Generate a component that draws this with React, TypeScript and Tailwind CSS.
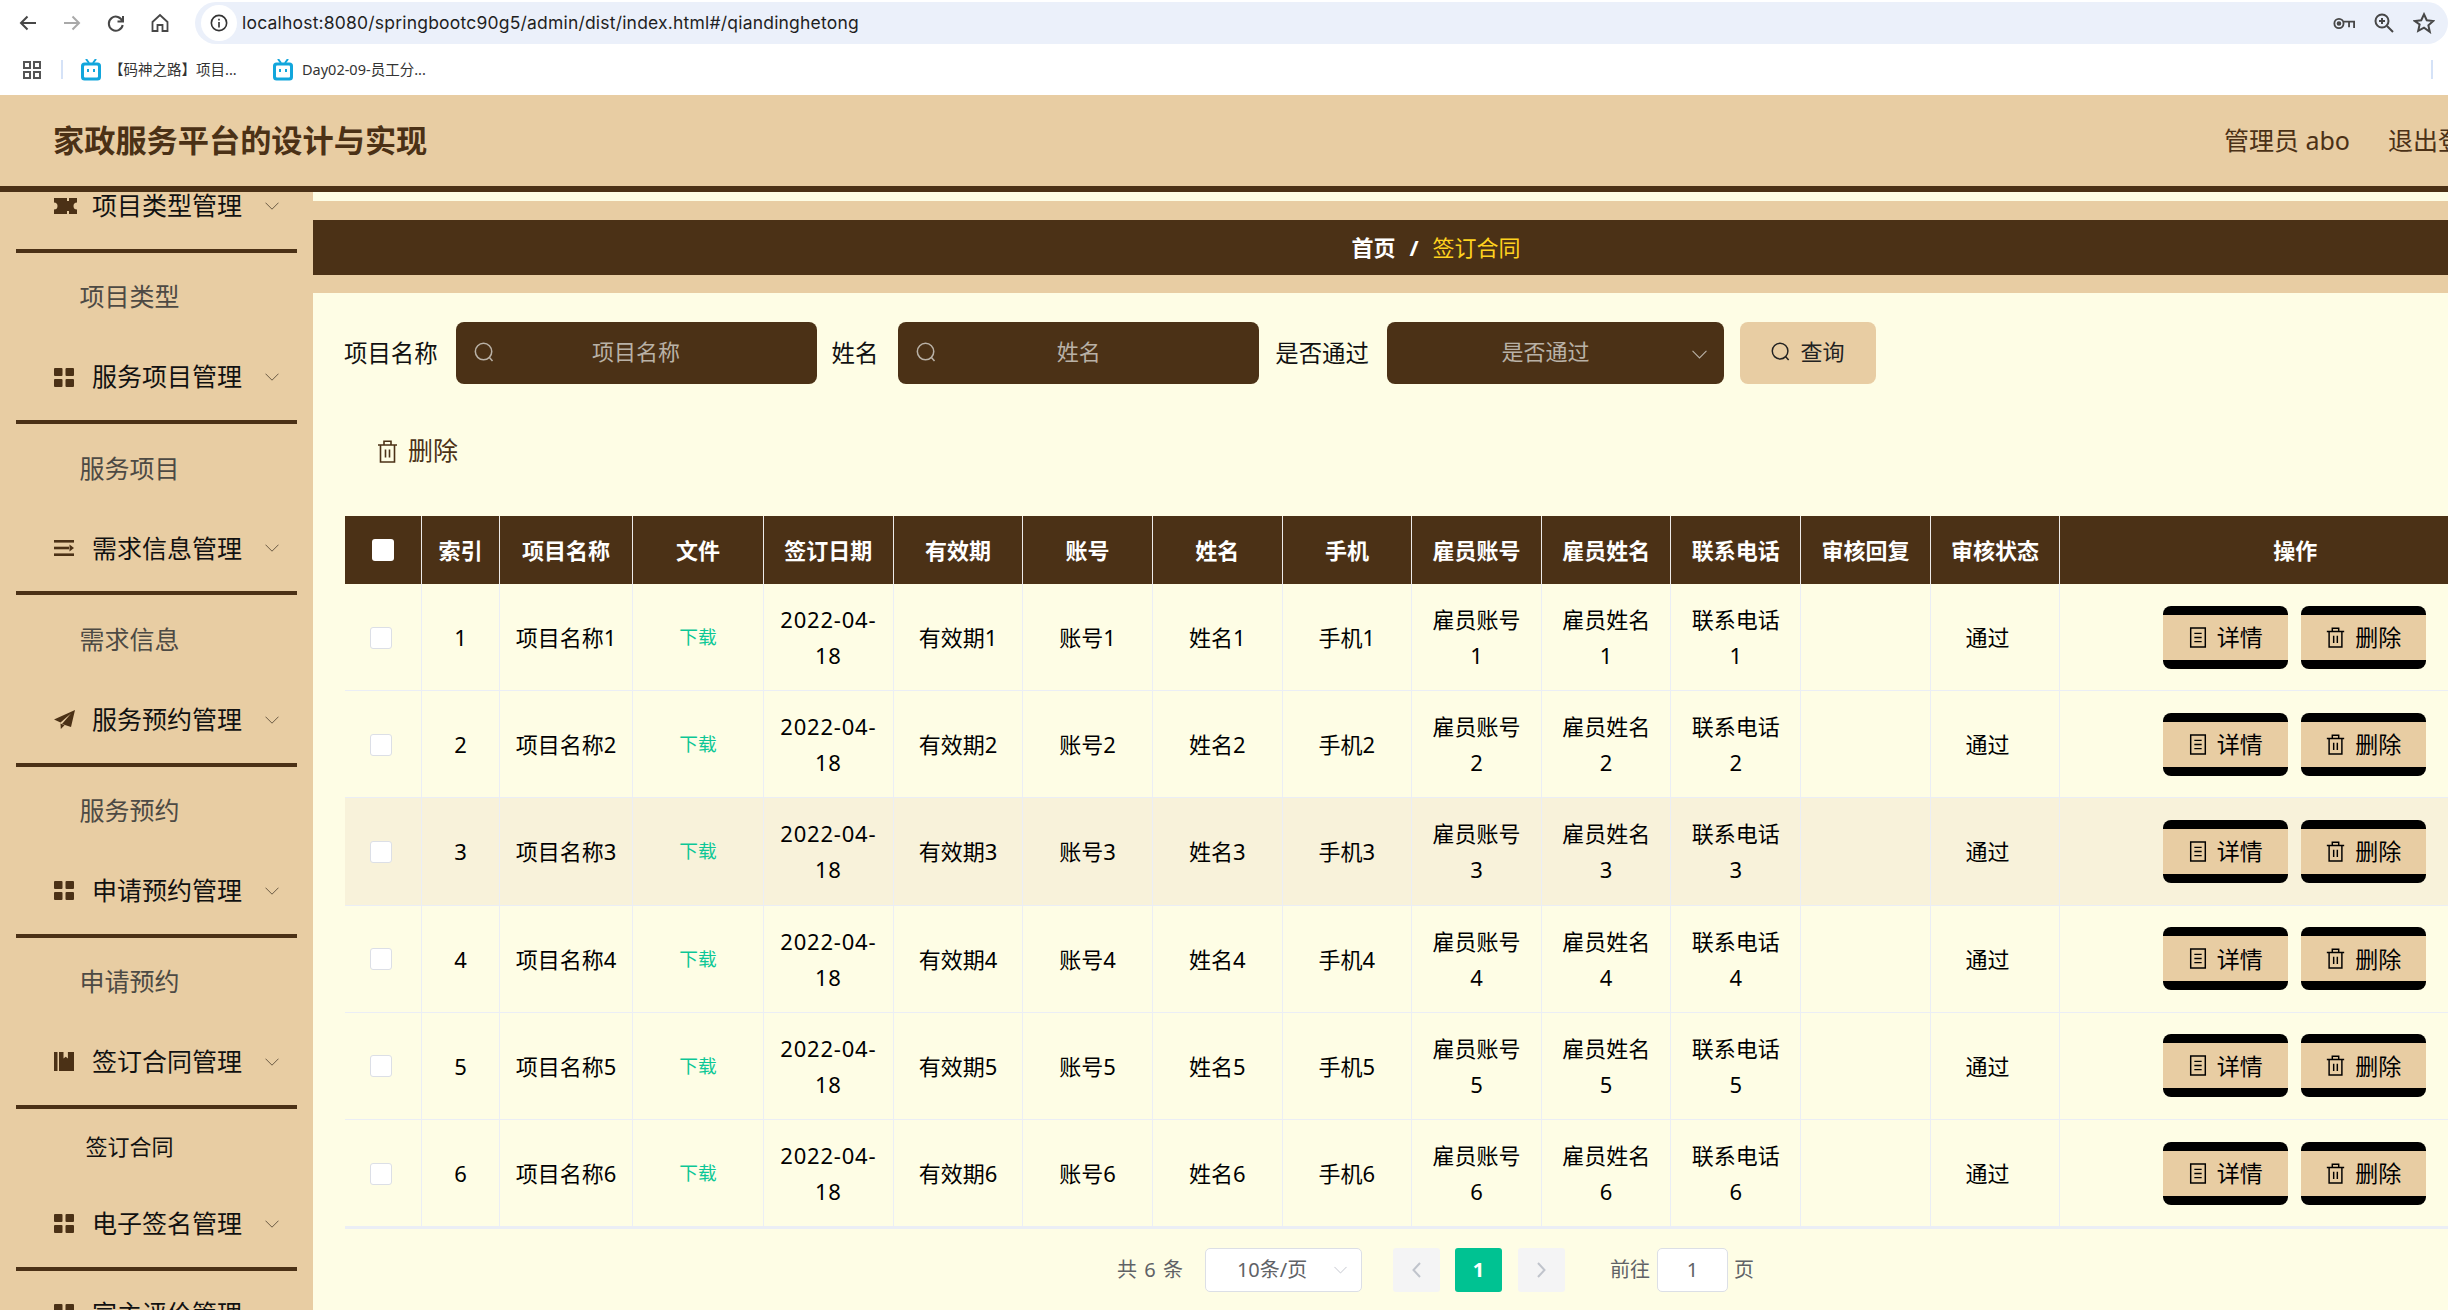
const FONT = "font-['Noto_Sans','Noto_Sans_CJK_SC',sans-serif]";

const menus = [
  { title: "项目类型管理", sub: "项目类型", icon: "ticket" },
  { title: "服务项目管理", sub: "服务项目", icon: "grid" },
  { title: "需求信息管理", sub: "需求信息", icon: "lines" },
  { title: "服务预约管理", sub: "服务预约", icon: "plane" },
  { title: "申请预约管理", sub: "申请预约", icon: "grid" },
  { title: "签订合同管理", sub: "签订合同", icon: "book", active: true },
  { title: "电子签名管理", sub: "", icon: "grid" },
  { title: "宣主评价管理", sub: "", icon: "grid" },
];

const columns = ["索引", "项目名称", "文件", "签订日期", "有效期", "账号", "姓名", "手机", "雇员账号", "雇员姓名", "联系电话", "审核回复", "审核状态", "操作"];

const MenuIcon = ({ name }: { name: string }) => {
  if (name === "ticket")
    return (
      <svg viewBox="0 0 23 16" className="w-[23px] h-[16px] fill-[#4b3116]">
        <path d="M0 0h13v3h2V0h8v4.5a3.5 3.5 0 0 0 0 7V16h-8v-3h-2v3H0v-4.5a3.5 3.5 0 0 0 0-7z" />
        <path d="M13 5h2v2h-2zM13 9h2v2h-2z" />
      </svg>
    );
  if (name === "grid")
    return (
      <svg viewBox="0 0 20 19" className="w-[20px] h-[19px] fill-[#4b3116]">
        <rect x="0" y="0" width="8.5" height="8" rx="1" />
        <rect x="11.5" y="0" width="8.5" height="8" rx="1" />
        <rect x="0" y="11" width="8.5" height="8" rx="1" />
        <rect x="11.5" y="11" width="8.5" height="8" rx="1" />
      </svg>
    );
  if (name === "lines")
    return (
      <svg viewBox="0 0 20 16" className="w-[20px] h-[16px] fill-[#4b3116]">
        <rect x="0" y="0" width="20" height="2.6" />
        <rect x="0" y="6.7" width="15" height="2.6" />
        <path d="M15.5 4.5 20 8l-4.5 3.5z" />
        <rect x="0" y="13.4" width="20" height="2.6" />
      </svg>
    );
  if (name === "plane")
    return (
      <svg viewBox="0 0 21 19" className="w-[21px] h-[19px] fill-[#4b3116]">
        <path d="M21 0 0 9.5l6.5 3L17 3.5 8 14l9 3z" />
        <path d="M6.5 13.5 6.8 19l3.7-3.7z" />
      </svg>
    );
  return (
    <svg viewBox="0 0 20 19" className="w-[20px] h-[19px] fill-[#4b3116]">
      <rect x="0" y="0" width="3.5" height="19" />
      <path d="M5 0h4.500v6.500l2.200-1.800 2.200 1.800V0H20v19H5z" />
    </svg>
  );
};

const Chevron = ({ className }: { className: string }) => (
  <svg viewBox="0 0 14 8" className={className} fill="none" stroke="currentColor" strokeWidth="1">
    <path d="M.5.7 7 7.2 13.5.7" />
  </svg>
);

const SearchIcon = ({ className }: { className: string }) => (
  <svg viewBox="0 0 22 22" className={className} fill="none" stroke="currentColor" strokeWidth="1.6">
    <circle cx="10" cy="10" r="8.6" />
    <path d="m16.2 16.2 3.2 3.6" />
  </svg>
);

const TrashIcon = ({ className }: { className: string }) => (
  <svg viewBox="0 0 20 23" className={className} fill="none" stroke="currentColor" strokeWidth="1.6">
    <path d="M.5 5h19M6.5 5V1.3h7V5M3 5v17h14V5M8 9.5v8M12 9.5v8" />
  </svg>
);

const DocIcon = ({ className }: { className: string }) => (
  <svg viewBox="0 0 18 23" className={className} fill="none" stroke="currentColor" strokeWidth="1.6">
    <path d="M1 1h16v21H1zM5 7h8M5 11.500h8M5 16h8" />
  </svg>
);

const BiliIcon = () => (
  <svg viewBox="0 0 20 22" className="w-[20px] h-[22px]">
    <path d="m5 0 3 4M15 0l-3 4" stroke="#12a6dc" strokeWidth="2" />
    <rect x="0" y="3.500" width="20" height="18" rx="3.500" fill="#12a6dc" />
    <rect x="3" y="6.500" width="14" height="12" rx="1" fill="#fff" />
    <rect x="6" y="10" width="2" height="3" fill="#12a6dc" />
    <rect x="12" y="10" width="2" height="3" fill="#12a6dc" />
  </svg>
);

const BrowserBar = () => (
  <div className="shrink-0 bg-white text-[#474747]">
    <div className="h-[44px] flex items-start">
      <div className="w-[195px] h-full flex items-center shrink-0 pl-[18px] pt-[2px] gap-[24px]">
        <svg viewBox="0 0 20 20" className="w-[20px] h-[20px]" fill="none" stroke="#474747" strokeWidth="2"><path d="M18 10H3M9.500 3.500 3 10l6.500 6.500" /></svg>
        <svg viewBox="0 0 20 20" className="w-[20px] h-[20px]" fill="none" stroke="#a9a9a9" strokeWidth="2"><path d="M2 10h15M10.500 3.500 17 10l-6.500 6.500" /></svg>
        <svg viewBox="0 0 20 20" className="w-[20px] h-[20px]" fill="none" stroke="#474747" strokeWidth="2"><path d="M16.500 8.500a7 7 0 1 0 .2 3.500M17 3v5.500h-5.500" /></svg>
        <svg viewBox="0 0 20 20" className="w-[20px] h-[20px]" fill="none" stroke="#474747" strokeWidth="1.800"><path d="M2.500 9 10 2l7.500 7v9h-5v-6h-5v6h-5z" /></svg>
      </div>
      <div className="mt-[2px] h-[42px] flex-1 bg-[#ebf0fa] rounded-l-[21px] rounded-r-[21px] flex items-center pl-[6px]">
        <div className="w-[36px] h-[36px] rounded-full bg-white flex items-center justify-center shrink-0">
          <svg viewBox="0 0 20 20" className="w-[18px] h-[18px]" fill="none" stroke="#333" strokeWidth="1.800">
            <circle cx="10" cy="10" r="8.500" />
            <path d="M10 9v6M10 5.200v2" />
          </svg>
        </div>
        <span className="ml-[5px] text-[17.500px] text-[#1f1f1f] font-['Inter',sans-serif] tracking-[0.2px] whitespace-nowrap">
          localhost:8080/springbootc90g5/admin/dist/index.html#/qiandinghetong
        </span>
        <div className="ml-auto mr-[13px] flex items-center gap-[19px]">
          <svg viewBox="0 0 24 14" className="w-[22px] h-[13px]" fill="none" stroke="#474747" strokeWidth="2">
            <circle cx="6.500" cy="7" r="5" />
            <circle cx="6.500" cy="7" r="1.500" fill="#474747" />
            <path d="M11.500 5H23v7M17.500 5v6" />
          </svg>
          <svg viewBox="0 0 20 20" className="w-[20px] h-[20px]" fill="none" stroke="#474747" strokeWidth="2">
            <circle cx="8" cy="8" r="6.500" />
            <path d="m13 13 6 6M8 5v6M5 8h6" />
          </svg>
          <svg viewBox="0 0 24 24" className="w-[22px] h-[22px]" fill="none" stroke="#474747" strokeWidth="2.200">
            <path d="m12 2.500 3 6.500 7 .8-5.200 4.800 1.500 7L12 17.100l-6.300 3.500 1.500-7L2 9.800 9 9z" />
          </svg>
        </div>
      </div>
    </div>
    <div className="h-[51px] flex items-center text-[14.500px] text-[#333] font-['Noto_Sans','Noto_Sans_CJK_SC',sans-serif]">
      <svg viewBox="0 0 18 18" className="ml-[23px] w-[18px] h-[18px]" fill="none" stroke="#555" strokeWidth="2">
        <rect x="1" y="1" width="6" height="6" />
        <rect x="11" y="1" width="6" height="6" />
        <rect x="1" y="11" width="6" height="6" />
        <rect x="11" y="11" width="6" height="6" />
      </svg>
      <div className="ml-[20px] w-[2px] h-[19px] bg-[#d5e2f7]" />
      <div className="ml-[18px]"><BiliIcon /></div>
      <span className="ml-[8px] w-[131px] whitespace-nowrap">【码神之路】项目...</span>
      <div className="ml-[33px]"><BiliIcon /></div>
      <span className="ml-[9px] whitespace-nowrap">Day02-09-员工分...</span>
      <div className="ml-auto mr-[15px] w-[2px] h-[19px] bg-[#d5e2f7]" />
    </div>
  </div>
);

const Sidebar = () => (
  <aside className="w-[313px] shrink-0 bg-[#e8cda3] overflow-hidden">
    <div className="-mt-[29px]">
      {menus.map((m) => (
        <div key={m.title}>
          <div className="h-[90px] mx-[16px] border-b-4 border-[#4b3116] flex items-center relative">
            <div className="w-[61px] pl-[38px] shrink-0 flex items-center">
              <MenuIcon name={m.icon} />
            </div>
            <span className="pl-[15px] text-[25px] text-[#111] whitespace-nowrap">{m.title}</span>
            <Chevron className="ml-[23px] w-[14px] h-[8px] text-[#6a5a44]" />
          </div>
          {m.sub && (
            m.active ? (
              <div className="h-[72px] pt-[3px] flex items-center justify-center pr-[0px] text-[22px] text-[#111] w-[259px]">{m.sub}</div>
            ) : (
              <div className="h-[81.200px] pt-[7px] flex items-center justify-center text-[25px] text-[#4d4a44] w-[259px]">{m.sub}</div>
            )
          )}
        </div>
      ))}
    </div>
  </aside>
);

const Filters = () => (
  <div className="flex items-center h-[62px] pl-[31px] text-[23.400px] text-[#111]">
    <span className="mt-[2px] whitespace-nowrap">项目名称</span>
    <div className="ml-[18px] w-[361px] h-[62px] pb-[3px] rounded-[8px] bg-[#4b3116] flex items-center relative text-[22px] text-[#b9b1a6] justify-center">
      <SearchIcon className="absolute left-[18px] top-[20px] w-[21px] h-[21px]" />
      <span>项目名称</span>
    </div>
    <span className="ml-[15px] mt-[2px] whitespace-nowrap">姓名</span>
    <div className="ml-[20px] w-[361px] h-[62px] pb-[3px] rounded-[8px] bg-[#4b3116] flex items-center relative text-[22px] text-[#b9b1a6] justify-center">
      <SearchIcon className="absolute left-[18px] top-[20px] w-[21px] h-[21px]" />
      <span>姓名</span>
    </div>
    <span className="ml-[16px] mt-[2px] whitespace-nowrap">是否通过</span>
    <div className="ml-[18px] w-[337px] h-[62px] pb-[3px] pr-[20px] rounded-[8px] bg-[#4b3116] flex items-center relative text-[22px] text-[#b9b1a6] justify-center">
      <span>是否通过</span>
      <Chevron className="absolute right-[17px] top-[28px] w-[15px] h-[9px]" />
    </div>
    <button className="ml-[16px] w-[136px] h-[62px] pb-[3px] rounded-[8px] bg-[#e8cda3] flex items-center justify-center gap-[9px] text-[22px] text-[#222]">
      <SearchIcon className="w-[20px] h-[20px]" />
      查询
    </button>
  </div>
);

const Row = ({ n }: { n: number }) => {
  const cell = "border-r border-b border-[#ebeef5] px-[15.600px] text-center align-middle";
  const fields = [`有效期${n}`, `账号${n}`, `姓名${n}`, `手机${n}`, `雇员账号${n}`, `雇员姓名${n}`, `联系电话${n}`];
  return (
    <tr className={n === 3 ? "h-[107.200px] bg-[#f8f2da]" : "h-[107.200px]"}>
      <td className={cell}>
        <div className="w-[22px] h-[22px] ml-[9px] mt-[1px] rounded-[3px] bg-white border border-[#dcdfe6]" />
      </td>
      <td className={cell}>{n}</td>
      <td className={cell}>项目名称{n}</td>
      <td className={cell}><span className="relative -top-[1px] text-[18.700px] text-[#0cc796]">下载</span></td>
      <td className={`${cell} tracking-[0.8px]`}>2022-04-18</td>
      {fields.map((f) => (
        <td key={f} className={cell}>{f}</td>
      ))}
      <td className={cell} />
      <td className={`${cell} pr-[31px]`}>通过</td>
      <td className="border-b border-[#ebeef5]">
        <div className="flex justify-center gap-[13px] pr-[2px]">
          <button className="w-[125px] h-[63px] rounded-[8px] border-y-[9px] border-black bg-[#e8cda3] flex items-center justify-center gap-[10px] pl-[1px] text-[23px] text-black">
            <DocIcon className="w-[18px] h-[21px]" />
            详情
          </button>
          <button className="w-[125px] h-[63px] rounded-[8px] border-y-[9px] border-black bg-[#e8cda3] flex items-center justify-center gap-[10px] pl-[1px] text-[23px] text-black">
            <TrashIcon className="w-[19px] h-[21px]" />
            删除
          </button>
        </div>
      </td>
    </tr>
  );
};

const DataTable = () => (
  <table className="w-[2185px] table-fixed border-separate border-spacing-0 text-[22px] leading-[36px] text-black border-b-2 border-[#ebeef5]">
    <colgroup>
      <col className="w-[77px]" />
      <col className="w-[78px]" />
      <col className="w-[133px]" />
      <col className="w-[131px]" />
      {Array.from({ length: 10 }).map((_, i) => (
        <col key={i} className="w-[129.650px]" />
      ))}
      <col />
    </colgroup>
    <thead>
      <tr className="h-[68px] bg-[#4b3116] text-white">
        <th className="border-r border-white/90">
          <div className="mx-auto w-[22px] h-[22px] rounded-[3px] bg-white" />
        </th>
        {columns.map((c) => (
          <th key={c} className="border-r border-white/90 last:border-r-0 font-bold whitespace-nowrap">{c}</th>
        ))}
      </tr>
    </thead>
    <tbody>
      {[1, 2, 3, 4, 5, 6].map((n) => (
        <Row key={n} n={n} />
      ))}
    </tbody>
  </table>
);

const Pager = () => (
  <div className="w-[2185px] mt-[19px] pr-[4px] h-[44px] flex items-center justify-center text-[20px] text-[#606266]">
    <span className="whitespace-nowrap tracking-[1px]">共 6 条</span>
    <div className="ml-[21px] w-[157px] h-[44px] rounded-[5px] bg-white border border-[#dcdfe6] flex items-center relative pl-[31px] whitespace-nowrap">
      10条/页
      <Chevron className="absolute right-[14px] top-[17px] w-[13px] h-[8px] text-[#c0c4cc]" />
    </div>
    <div className="ml-[31px] w-[47px] h-[44px] rounded-[3px] bg-[#f4f4f5] flex items-center justify-center text-[#c0c4cc]">
      <svg viewBox="0 0 9 16" className="w-[9px] h-[16px]" fill="none" stroke="currentColor" strokeWidth="2"><path d="M8 1 1.500 8 8 15" /></svg>
    </div>
    <div className="ml-[15px] w-[47px] h-[44px] rounded-[3px] bg-[#00c292] flex items-center justify-center text-white font-bold">1</div>
    <div className="ml-[16px] w-[47px] h-[44px] rounded-[3px] bg-[#f4f4f5] flex items-center justify-center text-[#c0c4cc]">
      <svg viewBox="0 0 9 16" className="w-[9px] h-[16px]" fill="none" stroke="currentColor" strokeWidth="2"><path d="m1 1 6.500 7L1 15" /></svg>
    </div>
    <span className="ml-[45px] whitespace-nowrap">前往</span>
    <div className="ml-[7px] w-[71px] h-[44px] rounded-[5px] bg-white border border-[#dcdfe6] flex items-center justify-center">1</div>
    <span className="ml-[6px]">页</span>
  </div>
);

export default function App() {
  return (
    <div className={`${FONT} w-[2448px] h-[1310px] overflow-hidden flex flex-col bg-[#fefde5]`}>
      <BrowserBar />
      <header className="shrink-0 w-[2530px] h-[97px] bg-[#e8cda3] border-b-[6px] border-[#4b3116] flex items-center pl-[53px] pr-[42px] text-[#4b3116]">
        <h1 className="text-[31.200px] font-bold whitespace-nowrap">家政服务平台的设计与实现</h1>
        <span className="ml-auto text-[25px] whitespace-nowrap">管理员 abo</span>
        <span className="ml-[38px] text-[25px] whitespace-nowrap">退出登录</span>
      </header>
      <div className="flex flex-1 min-h-0">
        <Sidebar />
        <main className="flex-1 min-w-0 flex flex-col overflow-hidden">
          <div className="h-[9px] shrink-0 bg-[#fefde5]" />
          <div className="shrink-0 bg-[#e8cda3] pt-[19px] pb-[18px]">
            <div className="w-[2246px] h-[55px] bg-[#4b3116] flex items-center justify-center text-[22px]">
              <span className="font-bold text-white">首页</span>
              <span className="mx-[14px] font-bold text-white">/</span>
              <span className="text-[#ffd21f]">签订合同</span>
            </div>
          </div>
          <div className="flex-1 pt-[29px] bg-[#fefde5]">
            <Filters />
            <div className="mt-[35px] pt-[2px] h-[62px] ml-[64px] flex items-center gap-[10px] text-[25px] text-[#4b3116]">
              <TrashIcon className="w-[21px] h-[23px]" />
              删除
            </div>
            <div className="mt-[35px] ml-[32px]">
              <DataTable />
              <Pager />
            </div>
          </div>
        </main>
      </div>
    </div>
  );
}
